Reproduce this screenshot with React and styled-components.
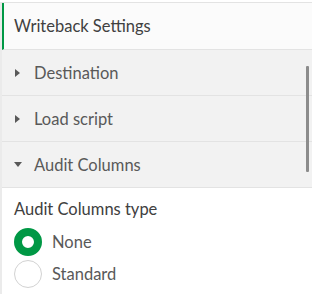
import styled, { createGlobalStyle } from "styled-components";

const Global = createGlobalStyle`
  html, body {
    margin: 0;
    padding: 0;
    background: #ffffff;
  }
  body {
    font-family: "Lato", "Open Sans", sans-serif;
    color: #404040;
  }
`;

const Panel = styled.div`
  position: relative;
  width: 312px;
  height: 294px;
  padding-top: 2px;
  box-sizing: border-box;
  overflow: hidden;
`;

const Inner = styled.div`
  border-top: 1px solid #e3e3e3;
  border-left: 2px solid #ebebeb;
  height: 100%;
  box-sizing: border-box;
`;

const Header = styled.div`
  display: flex;
  align-items: center;
  height: 46px;
  padding-left: 10px;
  background: #fbfbfb;
  border-bottom: 1px solid #e3e3e3;
  border-left: 2px solid #009845;
  font-size: 16.5px;
  color: #404040;
`;

const Row = styled.div`
  display: flex;
  align-items: center;
  gap: 12px;
  height: 45px;
  padding-left: 12px;
  background: #f2f2f2;
  border-bottom: 1px solid #e3e3e3;
  font-size: 16.5px;
  color: #595959;
`;

const Caret = styled.span`
  display: flex;
  align-items: center;
  justify-content: ${(p) => (p.open ? "center" : "flex-start")};
  width: 8px;
  height: 10px;

  &::before {
    content: "";
    width: 0;
    height: 0;
    ${(p) =>
      p.open
        ? `border-left: 4px solid transparent;
           border-right: 4px solid transparent;
           border-top: 5px solid #595959;`
        : `border-top: 4.5px solid transparent;
           border-bottom: 4.5px solid transparent;
           border-left: 5px solid #595959;
           margin-left: 1px;`}
  }
`;

const Body = styled.div`
  padding: 12px 12px 0 12px;
`;

const Label = styled.div`
  font-size: 16.5px;
  color: #404040;
  height: 18px;
  line-height: 18px;
  margin-bottom: 8px;
`;

const Option = styled.label`
  display: flex;
  align-items: center;
  gap: 10px;
  height: 32px;
  font-size: 16.5px;
  color: #595959;
`;

const Radio = styled.span`
  flex: none;
  width: 28px;
  height: 28px;
  box-sizing: border-box;
  border-radius: 50%;
  border: ${(p) => (p.checked ? "8px solid #009845" : "1px solid #d2d2d2")};
  background: #ffffff;
`;

const Scrollbar = styled.div`
  position: absolute;
  right: 3px;
  top: 66px;
  width: 3px;
  height: 106px;
  background: #8c8c8c;
  border-radius: 1px;
`;

export default function App() {
  return (
    <>
      <Global />
      <Panel>
        <Inner>
          <Header>Writeback Settings</Header>
          <Row>
            <Caret />
            Destination
          </Row>
          <Row>
            <Caret />
            Load script
          </Row>
          <Row>
            <Caret open />
            Audit Columns
          </Row>
          <Body>
            <Label>Audit Columns type</Label>
            <Option>
              <Radio checked />
              None
            </Option>
            <Option>
              <Radio />
              Standard
            </Option>
          </Body>
        </Inner>
        <Scrollbar />
      </Panel>
    </>
  );
}
